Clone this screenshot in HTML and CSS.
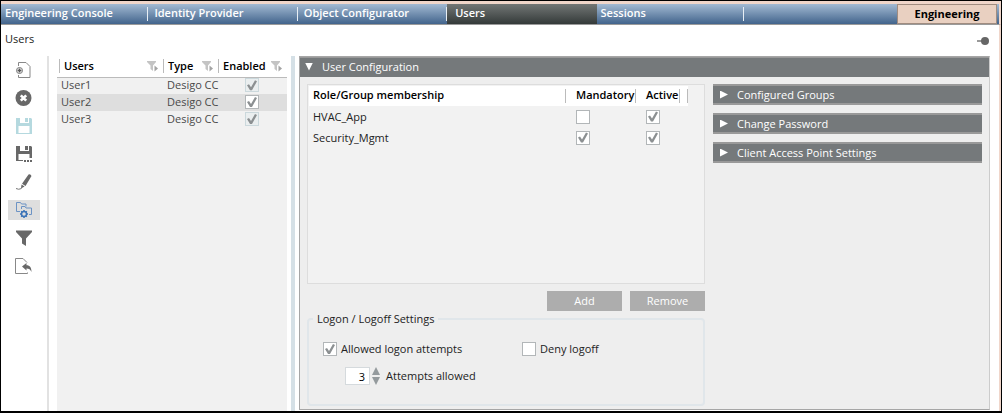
FILE: index.html
```html
<!DOCTYPE html>
<html lang="en">
<head>
    <meta charset="UTF-8">
    <meta name="viewport" content="width=device-width, initial-scale=1.0">
    <title>Users</title>
    <link rel="stylesheet" href="styles.css">
</head>
<body>
    <svg class="defs" width="0" height="0">
        <symbol id="filter" viewBox="0 0 12 12">
            <path fill="#c4c4c4" d="M0 1h9v1L6 5.500V11L3.500 9V5.500L0 2z"/>
            <path fill="#a4a4a4" d="M7.500 5.500L11 8.500L7.500 11.500z"/>
        </symbol>
    </svg>

    <nav class="tabs">
        <a class="tab" href="#">Engineering Console</a>
        <a class="tab" href="#">Identity Provider</a>
        <a class="tab" href="#">Object Configurator</a>
        <a class="tab active" href="#">Users</a>
        <a class="tab" href="#">Sessions</a>
        <button class="mode">Engineering</button>
    </nav>

    <header class="title-bar">
        <h1>Users</h1>
        <button class="pin" aria-label="Pin">
            <svg width="14" height="10" viewBox="0 0 14 10"><path d="M0 5h6" stroke="#777" stroke-width="1.500"/><circle cx="8" cy="5" r="4" fill="#666"/></svg>
        </button>
    </header>

    <main class="workspace">
        <div class="toolbar">
            <button class="tool" aria-label="New">
                <svg width="18" height="18" viewBox="0 0 18 18" fill="none" stroke="#888"><path d="M3.500 5V1.500h7.500l4 4v11h-11.500V14"/><circle cx="4.500" cy="9.500" r="3" fill="#fff" stroke="#777"/><path d="M2.500 9.500h4M4.500 7.500v4" stroke="#555" stroke-width="1.500"/></svg>
            </button>
            <button class="tool" aria-label="Delete">
                <svg width="18" height="18" viewBox="0 0 18 18"><circle cx="8.500" cy="9" r="8" fill="#686868"/><path d="M5.800 6.300l5.400 5.400M11.200 6.300l-5.400 5.400" stroke="#fff" stroke-width="2.600"/></svg>
            </button>
            <button class="tool" aria-label="Save">
                <svg width="18" height="18" viewBox="0 0 18 18"><path fill="#b5d9df" fill-rule="evenodd" d="M1 1h15l1 1v15H1zM5 1v5h9V1h-1v4h-3V1zM3.500 9v7h11V9z"/><path fill="#b5d9df" d="M10 1.500h2v3h-2z"/></svg>
            </button>
            <button class="tool" aria-label="Save as">
                <svg width="18" height="18" viewBox="0 0 18 18"><path fill="#686868" fill-rule="evenodd" d="M1 1h15l1 1v11H14.500V9h-11v6H8v1H1zM5 1v5h9V1h-1v4h-3V1z"/><path fill="#686868" d="M9 15h2v2H9zM12 15h2v2h-2zM15 15h2v2h-2z"/></svg>
            </button>
            <button class="tool" aria-label="Rename">
                <svg width="18" height="18" viewBox="0 0 18 18"><path fill="#686868" d="M13.500 1.500q2-1 3 1.500L10.500 13 7 10.800zM6.500 11.600L9.600 13.600 6 15.500z"/><path d="M1 15.500q2.500 1.500 5.500 0" fill="none" stroke="#777"/></svg>
            </button>
            <button class="tool selected" aria-label="Groups">
                <svg width="18" height="18" viewBox="0 0 18 18" fill="none" stroke="#6c93c4"><path d="M5 10.500H1.500v-9h4l1 1.500h4.500v2.500"/><path d="M6.500 8V5.500h3.500l1 1.500h5.500v6.500H14"/><circle cx="9" cy="13" r="2.500" stroke="#3c74b8" stroke-width="1.500"/><path stroke="#3c74b8" stroke-width="1.500" d="M9 9v1.500M9 15.500V17M5 13h1.500M11.500 13H13M6.200 10.200l1 1M10.800 14.800l1 1M11.800 10.200l-1 1M7.200 14.800l-1 1"/></svg>
            </button>
            <button class="tool" aria-label="Filter">
                <svg width="18" height="18" viewBox="0 0 18 18"><path fill="#686868" d="M1 1.500h16v1.500L11 9.500V17L7 14.500V9.500L1 3z"/></svg>
            </button>
            <button class="tool" aria-label="Revert">
                <svg width="18" height="18" viewBox="0 0 18 18"><path d="M12.500 15.500v1h-12v-15h7.500l4 4" fill="none" stroke="#888"/><path fill="#686868" d="M7 9.500l4.500-3.500v2.200c3.500 0 5 2.500 5 6.800-1-2.500-2.500-3.500-5-3.500v2z"/></svg>
            </button>
        </div>

        <section class="user-list">
            <table class="users">
                <thead>
                    <tr>
                        <th class="col-user"><span class="head">Users <svg width="12" height="12"><use href="#filter"/></svg></span></th>
                        <th class="col-type"><span class="head">Type <svg width="12" height="12"><use href="#filter"/></svg></span></th>
                        <th class="col-enabled"><span class="head">Enabled <svg width="12" height="12"><use href="#filter"/></svg></span></th>
                    </tr>
                </thead>
                <tbody>
                    <tr><td>User1</td><td>Desigo CC</td><td><input class="check dim" type="checkbox" aria-label="User1 enabled" checked></td></tr>
                    <tr class="selected"><td>User2</td><td>Desigo CC</td><td><input class="check" type="checkbox" aria-label="User2 enabled" checked></td></tr>
                    <tr><td>User3</td><td>Desigo CC</td><td><input class="check dim" type="checkbox" aria-label="User3 enabled" checked></td></tr>
                </tbody>
            </table>
        </section>

        <div class="splitter"></div>

        <section class="config">
            <button class="expander main-expander"><span class="arrow open"></span>User Configuration</button>
            <div class="config-body">
                <div class="left">
                    <div class="membership">
                        <table class="roles">
                            <thead>
                                <tr><th>Role/Group membership</th><th class="col-mandatory">Mandatory</th><th class="col-active">Active</th><th class="col-end"></th></tr>
                            </thead>
                            <tbody>
                                <tr><td>HVAC_App</td><td><input class="check" type="checkbox" aria-label="HVAC_App mandatory"></td><td><input class="check" type="checkbox" aria-label="HVAC_App active" checked></td><td></td></tr>
                                <tr><td>Security_Mgmt</td><td><input class="check" type="checkbox" aria-label="Security_Mgmt mandatory" checked></td><td><input class="check" type="checkbox" aria-label="Security_Mgmt active" checked></td><td></td></tr>
                            </tbody>
                        </table>
                    </div>
                    <div class="actions">
                        <button class="btn">Add</button>
                        <button class="btn">Remove</button>
                    </div>
                    <fieldset class="logon">
                        <legend>Logon / Logoff Settings</legend>
                        <div class="options">
                            <label><input class="check" type="checkbox" checked>Allowed logon attempts</label>
                            <label><input class="check" type="checkbox">Deny logoff</label>
                        </div>
                        <div class="attempts">
                            <input class="count" id="attempts" type="text" value="3">
                            <span class="spin">
                                <button class="up" aria-label="Increase"></button>
                                <button class="down" aria-label="Decrease"></button>
                            </span>
                            <label for="attempts">Attempts allowed</label>
                        </div>
                    </fieldset>
                </div>
                <div class="right">
                    <button class="expander"><span class="arrow"></span>Configured Groups</button>
                    <button class="expander"><span class="arrow"></span>Change Password</button>
                    <button class="expander"><span class="arrow"></span>Client Access Point Settings</button>
                </div>
            </div>
        </section>
    </main>
</body>
</html>
```
FILE: styles.css
```css
* {
    box-sizing: border-box;
}
body {
    margin: 0;
    min-height: 100vh;
    display: flex;
    flex-direction: column;
    border: 1px solid #000;
    border-bottom-width: 2px;
    background-color: #fff;
    font-family: "Open Sans", "Noto Sans", sans-serif;
    font-size: 11px;
    line-height: 16px;
    color: #222;
}
button, input {
    font: inherit;
    margin: 0;
    padding: 0;
    border: none;
}
button {
    background: none;
}
.defs {
    position: absolute;
}

/* top tabs */
.tabs {
    display: flex;
    height: 24px;
    padding-right: 2px;
    border-top: 3px solid #f0d6ca;
    border-right: 2px solid #f0d6ca;
    border-bottom: 1px solid #9a9a9a;
    background: linear-gradient(#a3bad3, #42648c);
}
.tab {
    flex: 0 0 15%;
    padding: 1px 4px;
    color: #fff;
    font-weight: 600;
    text-decoration: none;
    background: linear-gradient(#e8eef4, #e8eef4) right 2px center / 1px 14px no-repeat;
}
.tab.active {
    margin-left: -2px;
    padding-left: 8px;
    background: linear-gradient(#727675, #343a39);
}
.mode {
    width: 100px;
    margin-left: auto;
    border: 1px solid #a08c80;
    background-color: #e9d0c1;
    color: #000;
    font-weight: bold;
    line-height: 14px;
}
.title-bar {
    display: flex;
    justify-content: space-between;
    align-items: center;
    height: 31px;
    padding: 0 8px 0 4px;
    border-right: 2px solid #f0d6ca;
}
h1 {
    margin: 0;
    padding-bottom: 3px;
    font-size: 11px;
    font-weight: normal;
}
.pin svg, .tool svg {
    display: block;
}

.workspace {
    flex: 1;
    display: flex;
    border-right: 2px solid #f0d6ca;
}
.toolbar {
    display: flex;
    flex-direction: column;
    gap: 8px;
    width: 48px;
    padding: 4px 7px;
    border-right: 2px solid #e2e2e2;
}
.tool {
    display: flex;
    align-items: center;
    justify-content: center;
    width: 32px;
    height: 20px;
}
.tool.selected {
    background-color: #dedede;
}

/* user list */
.user-list {
    flex: 0 0 230px;
    margin: 0 4px 0 8px;
    background-color: #f1f1f1;
}
table {
    border-collapse: collapse;
    table-layout: fixed;
    width: 100%;
}
th {
    padding: 0;
    text-align: left;
    font-weight: 600;
    color: #000;
}
td {
    padding: 0 4px;
    line-height: 14px;
}
td .check {
    display: block;
}
.users th {
    height: 21px;
    padding: 3px 4px 3px 0;
    background-color: #fff;
    border-bottom: 1px solid #bbb;
}
.users .col-user {
    padding-left: 2px;
}
.users .col-type {
    width: 55px;
}
.users .col-enabled {
    width: 69px;
}
.head {
    display: flex;
    align-items: center;
    justify-content: space-between;
    height: 14px;
    padding-left: 4px;
    border-left: 1px solid #bbb;
}
.users td {
    height: 17px;
    padding-bottom: 1px;
    color: #4a4a4a;
    white-space: nowrap;
}
.users td .check {
    margin: 0 auto 0 23px;
}
.users .selected {
    background-color: #dedede;
}
.splitter {
    width: 4px;
    margin-right: 4px;
    background-color: #d5e0e6;
}

/* check boxes */
.check {
    appearance: none;
    flex: none;
    width: 14px;
    height: 14px;
    border: 1px solid #b2b6b8;
    background-color: #fff;
}
.check:checked::before {
    content: "";
    display: block;
    width: 12px;
    height: 12px;
    background-color: #8c9092;
    clip-path: polygon(1px 6px, 3px 5px, 5px 8px, 9px 1px, 11px 2px, 6px 11px, 4px 11px);
}
.check.dim {
    border-color: #cbd8dc;
    background-color: #eaeeef;
}

/* configuration panel */
.config {
    flex: 1;
    display: flex;
    flex-direction: column;
    margin: 0 9px 1px 0;
    border: 1px solid #a6a6a6;
    border-right-color: #ccc;
    background-color: #eee;
}
.expander {
    display: flex;
    align-items: center;
    gap: 9px;
    height: 21px;
    padding-left: 7px;
    border-top: 2px solid #999;
    border-bottom: 2px solid #999;
    background-color: #75797b;
    color: #fff;
}
.main-expander {
    height: 20px;
    padding: 0 0 2px 5px;
    border-top-width: 1px;
    border-bottom: none;
}
.arrow {
    width: 8px;
    height: 8px;
    background-color: #fff;
    clip-path: polygon(0 0, 100% 50%, 0 100%);
}
.arrow.open {
    clip-path: polygon(0 0, 100% 0, 50% 100%);
}
.config-body {
    flex: 1;
    display: grid;
    grid-template-columns: 398px 1fr;
    gap: 8px;
    padding: 7px 7px 3px;
}
.left {
    display: flex;
    flex-direction: column;
}
.membership {
    height: 200px;
    padding: 1px 16px 0 1px;
    border: 1px solid #ddd;
    background-color: #f2f2f2;
}
.roles th {
    height: 20px;
    padding-bottom: 2px;
    background: linear-gradient(#bbb, #bbb) right center / 1px 14px no-repeat #fff;
}
.roles th:first-child {
    padding-left: 4px;
}
.roles .col-mandatory {
    width: 70px;
    padding-left: 10px;
}
.roles .col-active {
    width: 44px;
    padding-left: 10px;
}
.roles .col-end {
    width: 8px;
}
.roles td {
    height: 21px;
}
.roles td + td {
    padding-left: 10px;
}
.actions {
    display: flex;
    justify-content: flex-end;
    gap: 8px;
    margin-top: 7px;
}
.btn {
    width: 75px;
    height: 20px;
    background-color: #adadad;
    color: #fff;
}
.logon {
    flex: 1;
    min-width: 0;
    margin: 0;
    padding: 14px;
    border: 2px solid #e0e6ea;
    border-radius: 4px;
}
legend {
    margin-left: -10px;
    padding: 0 4px;
}
label {
    display: flex;
    align-items: center;
    gap: 4px;
}
.options {
    display: grid;
    grid-template-columns: 199px 1fr;
}
.attempts {
    display: flex;
    align-items: center;
    gap: 2px;
    margin: 10px 0 0 22px;
}
.count {
    width: 25px;
    height: 18px;
    padding-right: 4px;
    border: 1px solid #d5dadd;
    background-color: #fff;
    text-align: right;
}
.spin {
    display: grid;
    gap: 2px;
    margin-right: 4px;
}
.up, .down {
    width: 8px;
    height: 8px;
    background-color: #949a9d;
}
.up {
    clip-path: polygon(50% 0, 100% 100%, 0 100%);
}
.down {
    clip-path: polygon(0 0, 100% 0, 50% 100%);
}
.right {
    display: flex;
    flex-direction: column;
    gap: 8px;
}
```
